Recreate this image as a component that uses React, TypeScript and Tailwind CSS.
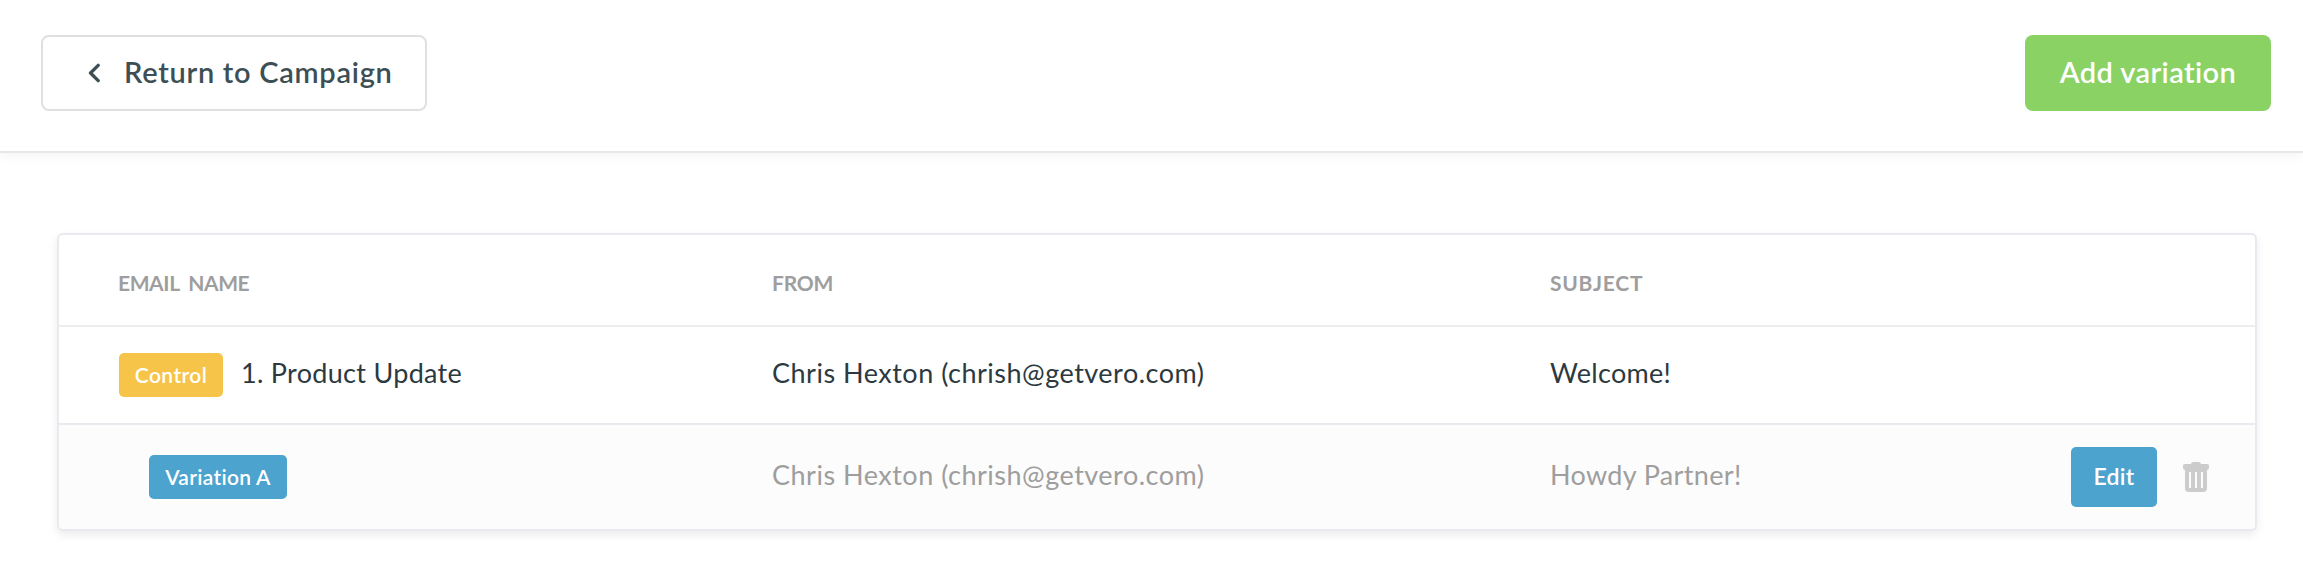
import React from "react";

const COLS = "grid grid-cols-[654px_778px_1fr] items-center pl-[59px]";

function ChevronLeft() {
  return (
    <svg width="12" height="20" viewBox="0 0 12 20" fill="none" className="shrink-0">
      <path d="M10.200 2.300 L2.500 10 L10.200 17.700" stroke="#3d4f55" strokeWidth="3.300" strokeLinecap="round" strokeLinejoin="round" />
    </svg>
  );
}

function Trash() {
  return (
    <svg width="26" height="30" viewBox="0 0 26 30" className="shrink-0">
      <path
        fill="#cccccc"
        fillRule="evenodd"
        d="M2 2H8C8.300 .8 9 0 10.500 0H15.500C17 0 17.700 .8 18 2H24C25.200 2 26 2.700 26 3.800V5.500C26 7 25.300 8 24 8V26.500C24 28.700 22.700 30 20.500 30H5.500C3.300 30 2 28.700 2 26.500V8C.7 8 0 7 0 5.500V3.800C0 2.700 .8 2 2 2ZM6 10V26H8V10ZM12 10V26H14V10ZM18 10V26H20V10Z"
      />
    </svg>
  );
}

export default function App() {
  return (
    <div className="h-[588px] w-full overflow-hidden bg-white font-['Lato',sans-serif] whitespace-nowrap">
      <header className="flex h-[153px] items-start justify-between border-b-2 border-[#e8e8e8] pt-[35px] pr-8 pl-[41px] shadow-[0_4px_10px_rgba(0,0,0,0.04)]">
        <button className="flex h-[76px] w-[386px] items-center rounded-lg border-2 border-[#e0e0e0] pl-[45px] text-[29px] font-semibold text-[#3d4f55]">
          <ChevronLeft />
          <span className="ml-[24px] pb-0.5 tracking-[0.72px]">Return to Campaign</span>
        </button>
        <button className="h-[76px] w-[246px] rounded-lg bg-[#8ad264] pb-0.5 text-[29px] font-semibold tracking-[0.4px] text-white">
          Add variation
        </button>
      </header>

      <main className="pt-20 pr-[46px] pl-[57px]">
        <section className="overflow-hidden rounded-md border-2 border-[#e9e9ef] bg-white shadow-[0_4px_10px_rgba(0,0,0,0.08)]">
          <div className={`${COLS} h-[92px] border-b-2 border-[#ededed] pt-1.5 text-[21px] font-bold text-[#9e9e9e]`}>
            <span className="tracking-[-0.4px] [word-spacing:4.5px]">EMAIL NAME</span>
            <span className="tracking-[-0.2px]">FROM</span>
            <span className="tracking-[0.75px]">SUBJECT</span>
          </div>
          <div className={`${COLS} h-[98px] border-b-2 border-[#e9e9ef] text-[27px] text-[#2c3a3f]`}>
            <div className="flex items-center pl-px">
              <span className="flex h-11 w-[104px] items-center justify-center rounded-[5px] bg-[#f6c448] text-[21px] font-semibold tracking-[0.4px] text-white">
                Control
              </span>
              <span className="ml-[18px] pb-1 tracking-[0.3px]">1. Product Update</span>
            </div>
            <span className="pb-1 tracking-[0.5px]">Chris Hexton (chrish@getvero.com)</span>
            <span className="pb-1 tracking-[0.3px]">Welcome!</span>
          </div>
          <div className={`${COLS} h-[104px] bg-[#fcfcfc] text-[27px] text-[#9e9e9e]`}>
            <div className="flex items-center pl-[31px]">
              <span className="flex h-11 w-[138px] items-center justify-center rounded-[5px] bg-[#4ba3ce] text-[21px] font-semibold tracking-[0.3px] text-white">
                Variation A
              </span>
            </div>
            <span className="pb-1 tracking-[0.5px]">Chris Hexton (chrish@getvero.com)</span>
            <div className="flex items-center">
              <span className="pb-1 tracking-[0.35px]">Howdy Partner!</span>
              <button className="mr-[26px] ml-auto h-[60px] w-[86px] rounded-[5px] bg-[#4ba3ce] pb-0.5 text-[23px] font-semibold tracking-[0.3px] text-white">
                Edit
              </button>
              <button className="mr-[46px]" aria-label="Delete">
                <Trash />
              </button>
            </div>
          </div>
        </section>
      </main>
    </div>
  );
}
